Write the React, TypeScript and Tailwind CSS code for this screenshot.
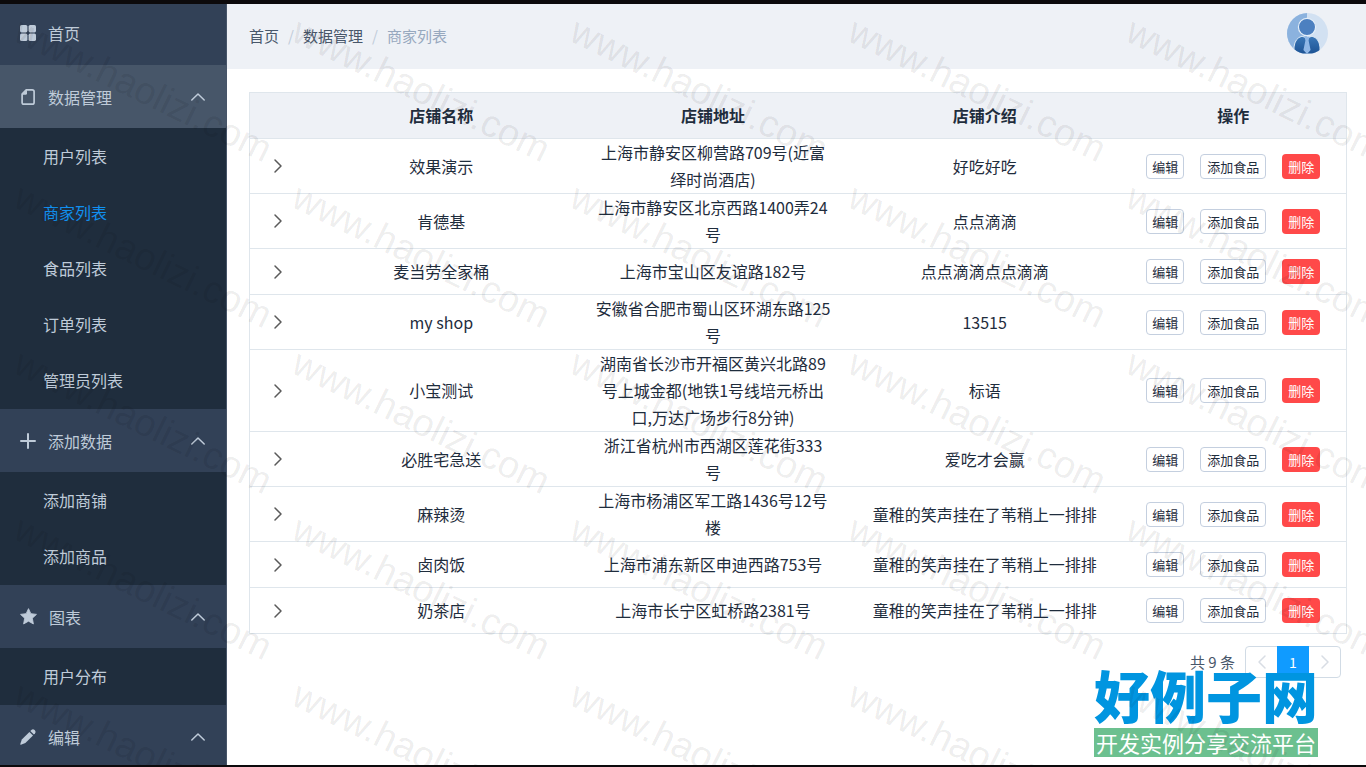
import { useState } from 'react'
import type { ReactNode } from 'react'

type MenuGroup = {
  title: string
  icon: ReactNode
  items: string[]
}

type Shop = {
  name: string
  address: string
  intro: string
}

const iconClass = 'w-4 h-4 shrink-0'

const GridIcon = () => (
  <svg viewBox="0 0 16 16" className={iconClass} fill="currentColor">
    <rect x="0" y="0" width="7.4" height="7.4" rx="1.6" />
    <rect x="8.6" y="0" width="7.4" height="7.4" rx="1.6" />
    <rect x="0" y="8.6" width="7.4" height="7.4" rx="1.6" />
    <rect x="8.6" y="8.6" width="7.4" height="7.4" rx="1.6" />
  </svg>
)

const DocumentIcon = () => (
  <svg viewBox="0 0 16 16" className={iconClass}>
    <path
      d="M6.2 .9H12.2Q14.1 .9 14.1 2.6V13.4Q14.1 15.1 12.2 15.1H3.9Q2.1 15.1 2.1 13.4V5.2Z"
      fill="none"
      stroke="currentColor"
      strokeWidth="1.7"
      strokeLinejoin="round"
    />
    <path d="M7 .6V4.4Q7 5.8 5.6 5.8H1.8Z" fill="currentColor" />
  </svg>
)

const PlusIcon = () => (
  <svg viewBox="0 0 16 16" className={iconClass} fill="none" stroke="currentColor" strokeWidth="2" strokeLinecap="round">
    <path d="M8 1V15M1 8H15" />
  </svg>
)

const StarIcon = () => (
  <svg viewBox="0 0 16 16" className="w-[17px] h-[17px] shrink-0" fill="currentColor">
    <path
      d="M8 .6L10.2 5.3L15.5 6L11.6 9.6L12.6 15L8 12.4L3.4 15L4.4 9.6L.5 6L5.8 5.3Z"
      stroke="currentColor"
      strokeWidth=".8"
      strokeLinejoin="round"
    />
  </svg>
)

const EditIcon = () => (
  <svg viewBox="0 0 16 16" className={iconClass} fill="currentColor">
    <path d="M9.4 2.9L13 6.5L5.4 14L.9 15.7Q.1 15.9 .3 15.1L1.8 10.5Z" />
    <path d="M10.3 2L11.7 .8Q13.1 -.2 14.6 1.1Q16.2 2.8 15.1 4.2L13.9 5.6Z" />
  </svg>
)

const Chevron = ({ d, className }: { d: string; className: string }) => (
  <svg
    viewBox="0 0 16 16"
    className={className}
    fill="none"
    stroke="currentColor"
    strokeWidth="1.5"
    strokeLinecap="round"
    strokeLinejoin="round"
  >
    <path d={d} />
  </svg>
)

const groups: MenuGroup[] = [
  { title: '数据管理', icon: <DocumentIcon />, items: ['用户列表', '商家列表', '食品列表', '订单列表', '管理员列表'] },
  { title: '添加数据', icon: <PlusIcon />, items: ['添加商铺', '添加商品'] },
  { title: '图表', icon: <StarIcon />, items: ['用户分布'] },
  { title: '编辑', icon: <EditIcon />, items: [] },
]

const shops: Shop[] = [
  { name: '效果演示', address: '上海市静安区柳营路709号(近富\n绎时尚酒店)', intro: '好吃好吃' },
  { name: '肯德基', address: '上海市静安区北京西路1400弄24\n号', intro: '点点滴滴' },
  { name: '麦当劳全家桶', address: '上海市宝山区友谊路182号', intro: '点点滴滴点点滴滴' },
  { name: 'my shop', address: '安徽省合肥市蜀山区环湖东路125\n号', intro: '13515' },
  { name: '小宝测试', address: '湖南省长沙市开福区黄兴北路89\n号上城金都(地铁1号线培元桥出\n口,万达广场步行8分钟)', intro: '标语' },
  { name: '必胜宅急送', address: '浙江省杭州市西湖区莲花街333\n号', intro: '爱吃才会赢' },
  { name: '麻辣烫', address: '上海市杨浦区军工路1436号12号\n楼', intro: '童稚的笑声挂在了苇稍上一排排' },
  { name: '卤肉饭', address: '上海市浦东新区申迪西路753号', intro: '童稚的笑声挂在了苇稍上一排排' },
  { name: '奶茶店', address: '上海市长宁区虹桥路2381号', intro: '童稚的笑声挂在了苇稍上一排排' },
]

function Sidebar() {
  const [active, setActive] = useState('商家列表')
  const [closed, setClosed] = useState<string[]>([])

  function toggle(title: string) {
    setClosed(closed.includes(title) ? closed.filter(t => t !== title) : [...closed, title])
  }

  return (
    <nav className="w-[227px] shrink-0 overflow-hidden bg-[#324157] border-r border-[#475569] text-[#bfcbd9]">
      <a href="#home" className="flex items-center gap-3 h-[61px] px-5 pb-1">
        <GridIcon />
        首页
      </a>

      {groups.map(group => (
        <div key={group.title}>
          <button
            onClick={() => toggle(group.title)}
            className={`flex items-center gap-3 w-full h-[63px] px-5 ${group.title === '数据管理' ? 'bg-[#475669]' : ''}`}
          >
            {group.icon}
            {group.title}
            <Chevron
              d="M1.8 11L8 5L14.2 11"
              className={`w-4 h-4 ml-auto ${closed.includes(group.title) ? 'rotate-180' : ''}`}
            />
          </button>
          {!closed.includes(group.title) && group.items.length > 0 && (
            <ul className="bg-[#1f2d3d] pb-px">
              {group.items.map(item => (
                <li key={item}>
                  <a
                    href={`#${item}`}
                    onClick={() => setActive(item)}
                    className={`flex items-center h-14 pl-[43px] ${active === item ? 'text-[#1190f0]' : ''}`}
                  >
                    {item}
                  </a>
                </li>
              ))}
            </ul>
          )}
        </div>
      ))}
    </nav>
  )
}

function Avatar() {
  return (
    <svg viewBox="0 0 41 41" className="w-[41px] h-[41px]">
      <defs>
        <clipPath id="avatar">
          <circle cx="20.5" cy="20.5" r="20.5" />
        </clipPath>
        <linearGradient id="suit" x1="0" y1="0" x2="0" y2="1">
          <stop offset="0" stopColor="#3b78b8" />
          <stop offset="1" stopColor="#1d5394" />
        </linearGradient>
      </defs>
      <g clipPath="url(#avatar)">
        <rect width="41" height="41" fill="#d2e1f2" />
        <rect width="20" height="41" fill="#8bb2de" />
        <circle cx="20" cy="14" r="8.6" fill="#4c80c0" stroke="#e4eef8" strokeWidth="1.2" />
        <path
          d="M7 41V34Q8 25 15 23.2L20 25L25 23.2Q32 25 33 34V41Z"
          fill="url(#suit)"
          stroke="#dbe8f5"
          strokeWidth="1"
        />
        <path d="M17.5 23.8H22.5L21.6 27.5L23.6 37L20 41L16.4 37L18.4 27.5Z" fill="#8fb7e6" />
      </g>
    </svg>
  )
}

function Header() {
  return (
    <header className="flex items-center justify-between h-[65px] pl-[22px] pr-[38px] bg-[#eef1f6]">
      <ol className="flex items-center text-[15px] text-[#48576a]">
        <li><a href="#home">首页</a></li>
        <li className="w-6 text-center text-[#bfcbd9]">/</li>
        <li><a href="#data">数据管理</a></li>
        <li className="w-6 text-center text-[#bfcbd9]">/</li>
        <li className="text-[#97a8be]">商家列表</li>
      </ol>
      <button aria-label="账户" className="mb-1.5">
        <Avatar />
      </button>
    </header>
  )
}

function ShopTable() {
  const outline = 'h-[25px] rounded border border-[#c4cfdf] bg-white'

  return (
    <table className="w-full table-fixed border border-[#dfe6ec] text-center leading-[27px]">
      <colgroup>
        <col className="w-14" />
        <col />
        <col />
        <col />
        <col className="w-[226px]" />
      </colgroup>
      <thead>
        <tr className="h-[46px] bg-[#eef1f6] border-b border-[#dfe6ec]">
          <th></th>
          <th>店铺名称</th>
          <th>店铺地址</th>
          <th>店铺介绍</th>
          <th>操作</th>
        </tr>
      </thead>
      <tbody>
        {shops.map(shop => (
          <tr key={shop.name} className="h-[46px] border-b border-[#dfe6ec]">
            <td>
              <button aria-label="展开" className="block mx-auto text-[#5a5a5a]">
                <Chevron d="M5 2L11 8L5 14" className="w-4 h-4" />
              </button>
            </td>
            <td>{shop.name}</td>
            <td className="whitespace-pre-line">{shop.address}</td>
            <td>{shop.intro}</td>
            <td>
              <div className="flex justify-center gap-4 text-[13px] leading-none">
                <button className={`${outline} px-[5px]`}>编辑</button>
                <button className={`${outline} px-1.5`}>添加食品</button>
                <button className="h-[25px] px-1.5 rounded bg-[#ff4949] text-white">删除</button>
              </div>
            </td>
          </tr>
        ))}
      </tbody>
    </table>
  )
}

function Pagination() {
  return (
    <div className="flex items-center justify-end gap-2.5 mt-3 pr-1.5 text-[15px] text-[#48576a]">
      <span>共 9 条</span>
      <div className="flex h-8 border border-[#d1dbe5] rounded-sm bg-white text-[#d8dde4]">
        <button aria-label="上一页" disabled className="w-[31px] flex items-center justify-center">
          <Chevron d="M11 2L5 8L11 14" className="w-4 h-4" />
        </button>
        <button className="w-8 -my-px bg-[#109bff] text-white text-sm">1</button>
        <button aria-label="下一页" disabled className="w-[31px] flex items-center justify-center">
          <Chevron d="M5 2L11 8L5 14" className="w-4 h-4" />
        </button>
      </div>
    </div>
  )
}

function Watermark() {
  return (
    <div
      aria-hidden="true"
      className="absolute inset-0 overflow-hidden pointer-events-none grid grid-cols-[repeat(5,278px)] auto-rows-[166px] pl-3 pt-1.5
                 font-['Liberation_Sans',sans-serif] text-[38px] leading-10 text-black/8"
    >
      {Array.from({ length: 25 }, (_, i) => (
        <span key={i} className="origin-top-left rotate-[26deg] translate-x-3.5 whitespace-nowrap">
          www.haolizi.com
        </span>
      ))}
    </div>
  )
}

export default function App() {
  return (
    <div
      className="relative flex h-screen overflow-hidden bg-white border-t-4 border-b-2 border-[#0c0a0c]
                 font-['Noto_Sans_CJK_SC',sans-serif] text-base text-[#1f2d3d]"
    >
      <Sidebar />

      <main className="flex-1 min-w-0">
        <Header />
        <div className="pl-[22px] pr-[19px] pt-[23px]">
          <ShopTable />
          <Pagination />
        </div>
      </main>

      {/* Site badge */}
      <div className="absolute right-12 bottom-2 text-center whitespace-nowrap">
        <div className="pb-1 text-[56px] leading-[60px] font-black text-[#0095e0]">好例子网</div>
        <div className="h-[29px] bg-[#6cc08f] text-white text-[22px] leading-[29px]">开发实例分享交流平台</div>
      </div>

      <Watermark />
    </div>
  )
}
